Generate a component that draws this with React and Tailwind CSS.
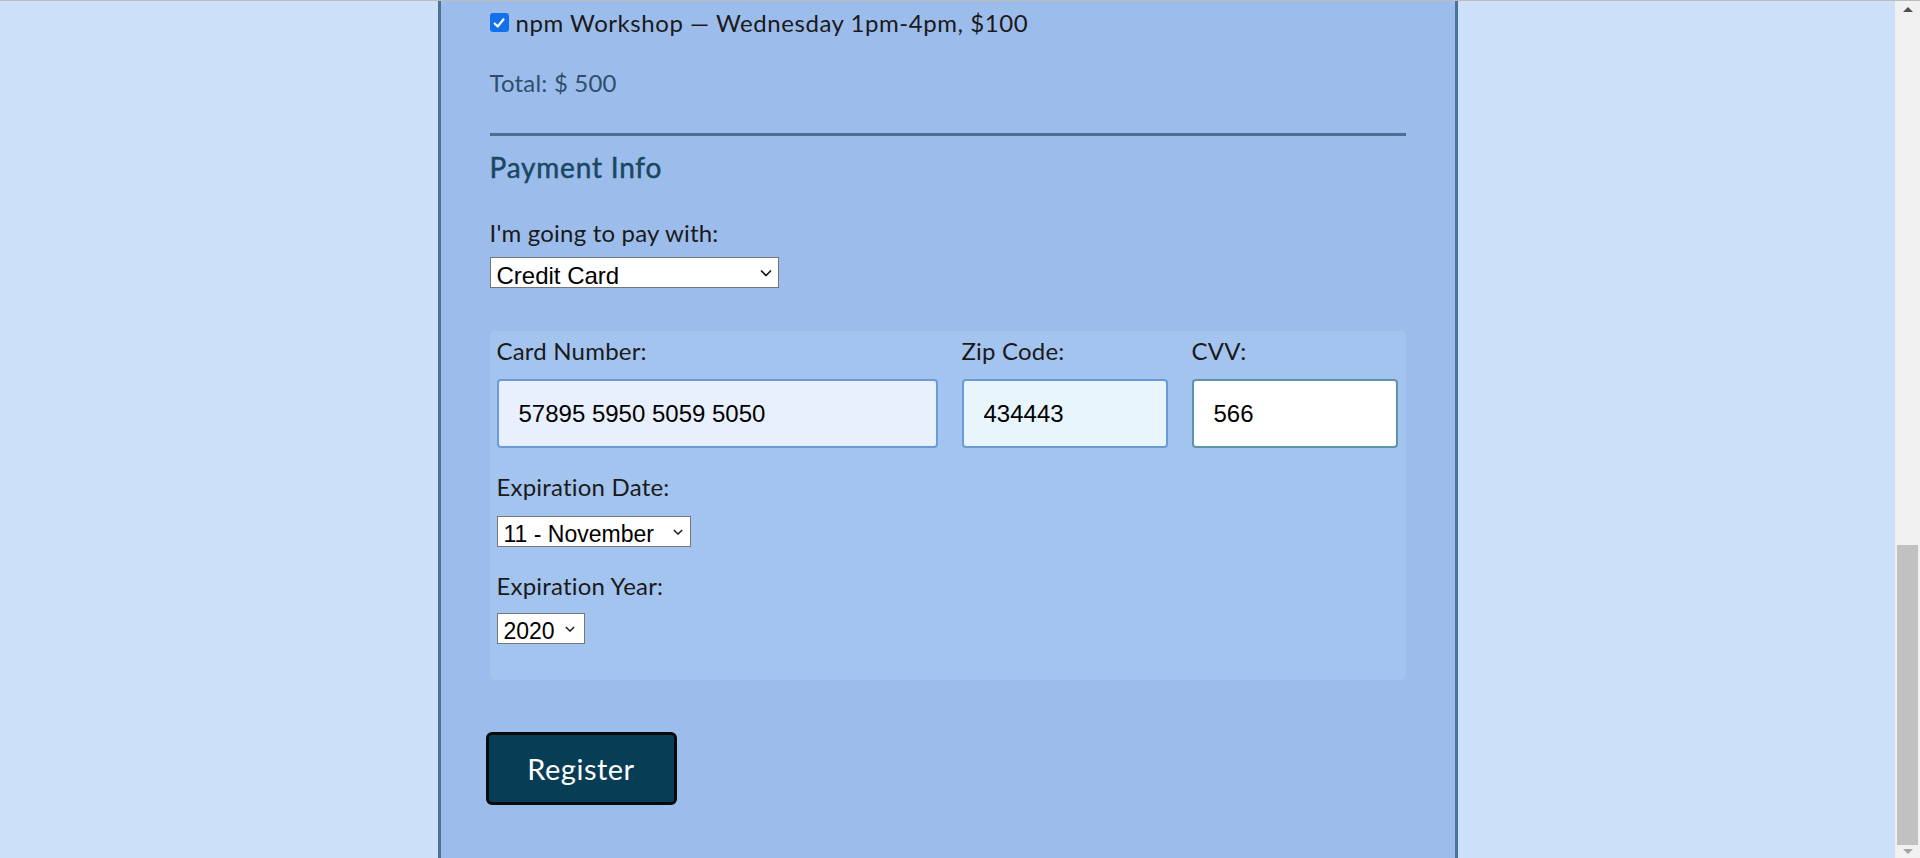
import React from 'react';

const labelText = "font-['Lato',sans-serif] text-[24px] leading-[33px] tracking-[0.2px] text-[#1a1a1a]";
const fieldText = "font-['Liberation_Sans',Arial,sans-serif] text-black";

const Chevron = ({ className }) => (
  <svg viewBox="0 0 12 7" fill="none" stroke="currentColor" strokeWidth="1.7" className={className}>
    <polyline points="1 1 6 6 11 1" />
  </svg>
);

// native select with our own arrow drawn over it
const Select = ({ value, options, width, size, arrow }) => (
  <div className={`relative ${width}`}>
    <select
      defaultValue={value}
      className={`${fieldText} ${size} block h-[31px] w-full appearance-none rounded-none border border-[#767676] bg-white pl-[6px]`}
    >
      {options.map((o) => (
        <option key={o}>{o}</option>
      ))}
    </select>
    <Chevron className={`pointer-events-none absolute top-1/2 -translate-y-1/2 text-[#1a1a1a] ${arrow}`} />
  </div>
);

const CardField = ({ label, value, bg, border }) => (
  <div className="flex flex-col">
    <label className={labelText}>{label}</label>
    <input
      defaultValue={value}
      className={`${fieldText} mt-[12px] h-[69px] w-full rounded-[4px] border-2 ${border} ${bg} pl-[20px] text-[24px]`}
    />
  </div>
);

const Scrollbar = () => (
  <div className="flex w-[25px] flex-col bg-[#f1f1f1]">
    <div className="flex h-[17px] items-center justify-center">
      <div className="h-0 w-0 border-x-[5px] border-b-[5px] border-x-transparent border-b-[#505050]" />
    </div>
    <div className="flex-1" />
    <div className="mx-[2px] h-[300px] bg-[#c1c1c1]" />
    <div className="flex h-[13px] items-center justify-center">
      <div className="h-0 w-0 border-x-[5px] border-t-[5px] border-x-transparent border-t-[#a3a3a3]" />
    </div>
  </div>
);

export default function App() {
  return (
    <div className="flex h-[858px] w-full flex-col overflow-hidden">
      <div className="h-px bg-[#bdbdbd]" />
      <div className="flex flex-1">
        <div className="flex flex-1 justify-center bg-[#cce0fa]">
          <div className="w-[1020px] border-x-[3px] border-[#4a7494] bg-[#9cbdec] px-[49px]">
            {/* workshop list (tail end) */}
            <div className="mt-[5px] flex items-center gap-[7px]">
              <span className="flex h-[19px] w-[19px] items-center justify-center rounded-[3px] bg-[#1170ea]">
                <svg viewBox="0 0 16 16" className="h-[14px] w-[14px]" fill="none" stroke="white" strokeWidth="2.6" strokeLinecap="round" strokeLinejoin="round">
                  <polyline points="3 8.5 6.5 12 13 4" />
                </svg>
              </span>
              <span className="font-['Lato',sans-serif] text-[24px] leading-[33px] tracking-[0.55px] text-[#1a1a1a]">
                npm Workshop — Wednesday 1pm-4pm, $100
              </span>
            </div>
            <p className="mt-[27px] font-['Lato',sans-serif] text-[24px] leading-[33px] tracking-[0.2px] text-[#2f4e6c]">Total: $ 500</p>

            <div className="mt-[34px] h-[3px] bg-[#4a6f93]" />

            <h3 className="mt-[12px] font-['Lato',sans-serif] text-[28px] leading-[38px] tracking-[0.8px] text-[#1a4862] [-webkit-text-stroke:0.5px_#1a4862]">
              Payment Info
            </h3>

            <label className={`${labelText} mt-[30px] block`}>I'm going to pay with:</label>
            <div className="mt-[8px]">
              <Select
                value="Credit Card"
                options={['Select Payment Method', 'Credit Card', 'PayPal', 'Bitcoin']}
                width="w-[289px]"
                size="text-[24px]"
                arrow="right-[7px] h-[7px] w-[12px]"
              />
            </div>

            {/* credit card box */}
            <div className="mt-[43px] rounded-[5px] bg-[#a4c4f0] px-[7px] pb-[36px] pt-[3px]">
              <div className="grid grid-cols-[441px_206px_206px] gap-x-[24px]">
                <CardField label="Card Number:" value="57895 5950 5059 5050" bg="bg-[#e8f0fd]" border="border-[#6b9bd6]" />
                <CardField label="Zip Code:" value="434443" bg="bg-[#e8f5fd]" border="border-[#6b9bd6]" />
                <CardField label="CVV:" value="566" bg="bg-white" border="border-[#5f93ab]" />
              </div>

              <label className={`${labelText} mt-[22px] block`}>Expiration Date:</label>
              <div className="mt-[13px]">
                <Select
                  value="11 - November"
                  options={['1 - January', '2 - February', '3 - March', '4 - April', '5 - May', '6 - June', '7 - July', '8 - August', '9 - September', '10 - October', '11 - November', '12 - December']}
                  width="w-[194px]"
                  size="text-[23px]"
                  arrow="right-[8px] h-[6px] w-[10px]"
                />
              </div>

              <label className={`${labelText} mt-[22px] block`}>Expiration Year:</label>
              <div className="mt-[11px]">
                <Select
                  value="2020"
                  options={['2020', '2021', '2022', '2023', '2024']}
                  width="w-[88px]"
                  size="text-[23px]"
                  arrow="right-[10px] h-[6px] w-[10px]"
                />
              </div>
            </div>

            <button className="-ml-[4px] mt-[52px] h-[73px] w-[191px] rounded-[6px] border-[3px] border-[#0a0a0a] bg-[#083d56] font-['Lato',sans-serif] text-[29px] tracking-[0.5px] text-white">
              Register
            </button>
          </div>
        </div>
        <Scrollbar />
      </div>
    </div>
  );
}
